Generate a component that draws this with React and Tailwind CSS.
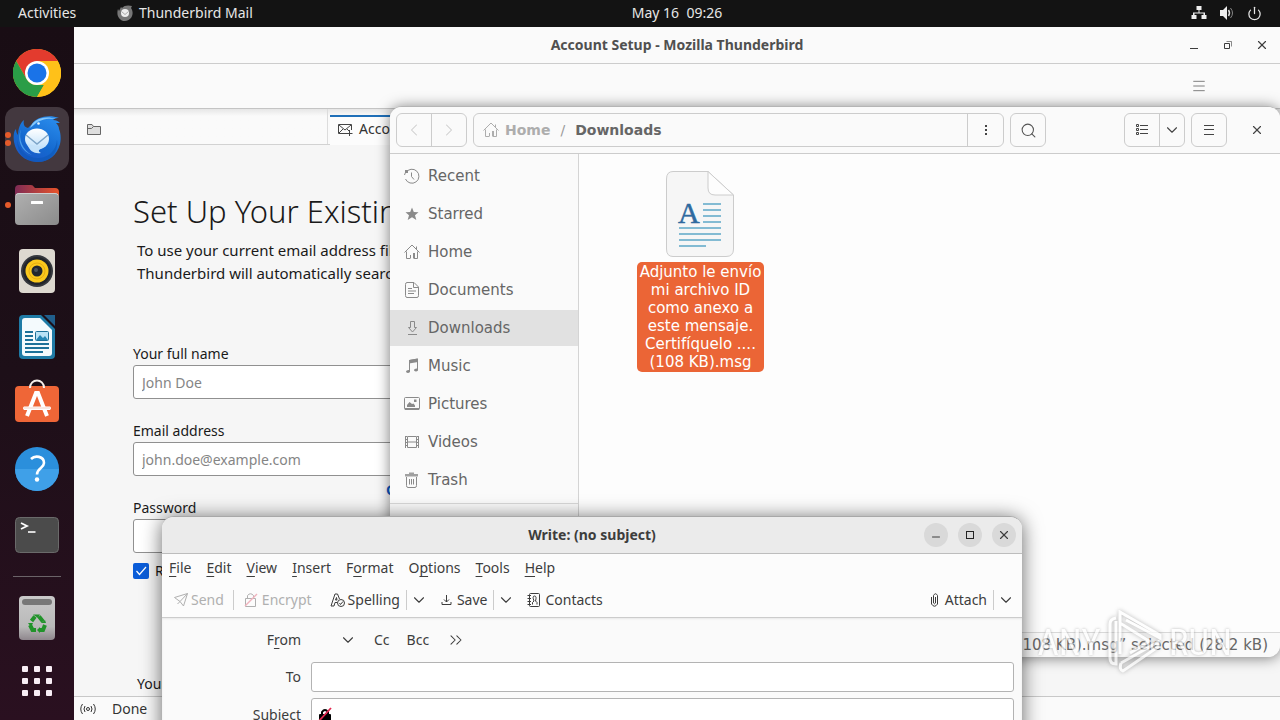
import React from "react";
import {
  ChevronDown,
  ChevronLeft,
  ChevronRight,
  ChevronsRight,
  Menu,
  Minus,
  Power,
  Search,
  X,
} from "lucide-react";

function ChromeIcon() {
  return (
    <svg width="48" height="48" viewBox="0 0 48 48">
      <circle cx="24" cy="24" r="24" fill="#ffc119" />
      <path d="M24 12 H44.8 A24 24 0 0 0 3.2 12 L13.6 30 Z" fill="#e33b2e" />
      <path d="M3.2 12 L13.6 30 A12 12 0 0 0 24 36 H31 L24 48 A24 24 0 0 1 3.2 12 Z" fill="#2a9d47" />
      <path d="M34.4 30 L24 48 A24 24 0 0 0 44.8 12 H24 Z" fill="#ffc119" />
      <circle cx="24" cy="24" r="12" fill="#fff" />
      <circle cx="24" cy="24" r="9.5" fill="#1a73e8" />
    </svg>
  );
}

function ThunderbirdIcon() {
  return (
    <svg width="48" height="48" viewBox="0 0 48 48">
      <defs>
        <linearGradient id="bird" x1="0.8" y1="0" x2="0.3" y2="1">
          <stop offset="0" stopColor="#2a8cec" />
          <stop offset="0.6" stopColor="#1469cf" />
          <stop offset="1" stopColor="#1c58c8" />
        </linearGradient>
        <linearGradient id="mail" x1="0" y1="0" x2="0" y2="1">
          <stop offset="0" stopColor="#ffffff" />
          <stop offset="1" stopColor="#bfe0fa" />
        </linearGradient>
      </defs>
      <path
        d="M19 9 C23 2 36 -1 46 3 C42 3 41 4 40 5 C43 5 45 6 47 8 L43 8 C45 10 46 12 46 14 C48 18 48 25 47 29 C44 41 34 48 23 47 C11 46 3 38 1 27 C0 20 1 16 3 14 C3 17 4 19 5 20 C5 14 7 8 11 5 C10 9 11 12 15 13 Z"
        fill="url(#bird)"
      />
      <path d="M4 25 C6 35 14 43 25 43 C35 43 43 36 44 25 C46 36 38 47 25 47 C12 47 4 38 4 25 Z" fill="#0d56b5" opacity="0.6" />
      <path d="M8 14 C5 25 10 35 19 40 C10 37 3 27 8 14 Z" fill="#55acf2" opacity="0.8" />
      <path d="M17 13 C20 4 32 0 43 4 C34 3 26 5 22 9 Z" fill="#84c7fb" />
      <ellipse cx="24" cy="24" rx="12" ry="10.5" fill="url(#mail)" />
      <path d="M13 20 L24 29 L35 20" fill="none" stroke="#7da5c8" strokeWidth="1.4" />
      <path d="M14 29 C17 37 22 39 28 38 C24 36 26 34 31 32 Z" fill="#c5e2f9" />
      <circle cx="25.500" cy="8.500" r="1.300" fill="#e5f5ff" />
    </svg>
  );
}

function FilesIcon() {
  return (
    <svg width="48" height="48" viewBox="0 0 48 48">
      <defs>
        <linearGradient id="folder" x1="0" y1="0" x2="1" y2="0">
          <stop offset="0" stopColor="#7e2b55" />
          <stop offset="1" stopColor="#e9542a" />
        </linearGradient>
        <linearGradient id="drawer" x1="0" y1="0" x2="1" y2="1">
          <stop offset="0" stopColor="#b0b0b0" />
          <stop offset="1" stopColor="#8b8b8b" />
        </linearGradient>
      </defs>
      <path d="M2 8 Q2 4 6 4 H18 Q20 4 21 6 L22 7 H42 Q46 7 46 11 V24 H2 Z" fill="url(#folder)" />
      <rect x="2" y="12" width="44" height="32" rx="4" fill="url(#drawer)" />
      <path d="M3 14 Q4 12.500 6 12.500 H42 Q44 12.500 45 14" fill="none" stroke="#d0d0d0" />
      <rect x="18" y="20" width="12" height="3" rx="0.500" fill="#fff" />
    </svg>
  );
}

function SpeakerIcon() {
  return (
    <svg width="48" height="48" viewBox="0 0 48 48">
      <rect x="6" y="2" width="36" height="44" rx="4" fill="#ddd9d0" />
      <circle cx="24" cy="24" r="16" fill="#35383d" />
      <circle cx="24" cy="24" r="14" fill="#22252a" />
      <circle cx="24" cy="24" r="11.500" fill="#fbc91c" />
      <circle cx="24" cy="24" r="8" fill="none" stroke="#e6ad12" />
      <circle cx="24" cy="24" r="5.500" fill="#22272e" />
      <circle cx="23" cy="23" r="2" fill="#4a525c" />
    </svg>
  );
}

function WriterIcon() {
  return (
    <svg width="48" height="48" viewBox="0 0 48 48">
      <path d="M10 2 H28 L42 16 V42 Q42 46 38 46 H10 Q6 46 6 42 V6 Q6 2 10 2 Z" fill="#1f7ba6" />
      <path d="M31 2 H42 V13 Z" fill="#205f8c" />
      <path d="M12 5 H27 L39 17 V40 Q39 43 36 43 H12 Q9 43 9 40 V8 Q9 5 12 5 Z" fill="#f4fafd" />
      <path d="M12 19 H20 M12 23 H20 M12 27 H20 M12 31 H36 M12 35 H36 M12 39 H30" stroke="#1d7199" strokeWidth="1.800" />
      <rect x="22.500" y="18.500" width="13" height="9" rx="1" fill="#b9e2f6" stroke="#1d7199" />
      <path d="M23 27 L27 22 L30 25 L32 23 L35 27 Z" fill="#2686b4" />
    </svg>
  );
}

function SoftwareIcon() {
  return (
    <svg width="48" height="48" viewBox="0 0 48 48">
      <rect x="2" y="7" width="44" height="36" rx="4" fill="#ef6637" />
      <path d="M17 9 C17 -1 31 -1 31 9" fill="none" stroke="#f6eee9" strokeWidth="2" />
      <path d="M14 37 L23 14 H25 L34 37" fill="none" stroke="#fff" strokeWidth="4" />
      <path d="M11 27.500 H37 Q39 29 37 31 H11 Q9 29 11 27.500 Z" fill="#fff" />
      <path d="M11 29 H37" stroke="#e8b7a4" strokeWidth="0.600" />
    </svg>
  );
}

function HelpIcon() {
  return (
    <svg width="48" height="48" viewBox="0 0 48 48">
      <circle cx="24" cy="24" r="22" fill="#2b8fdc" />
      <path d="M2 24 A22 22 0 0 0 46 24 Z" fill="#3fa0e8" />
      <path d="M18 14 C22 10 31 11 31 18 C31 23 24 23 24 29.500" fill="none" stroke="#fff" strokeWidth="2.600" />
      <circle cx="24" cy="34.500" r="2.200" fill="#fff" />
    </svg>
  );
}

function TerminalIcon() {
  return (
    <svg width="48" height="48" viewBox="0 0 48 48">
      <rect x="2.500" y="6.500" width="43" height="35" rx="4" fill="#4b4b4b" stroke="#6a6a6a" />
      <path d="M8 12 L14 15 L8 18" fill="none" stroke="#fff" strokeWidth="1.800" />
      <path d="M15 21 H22.500" stroke="#fff" strokeWidth="1.600" />
    </svg>
  );
}

function TrashBinIcon() {
  return (
    <svg width="48" height="48" viewBox="0 0 48 48">
      <defs>
        <linearGradient id="bin" x1="0" y1="0" x2="0" y2="1">
          <stop offset="0" stopColor="#c9c9c9" />
          <stop offset="0.700" stopColor="#b9b9b9" />
          <stop offset="1" stopColor="#8f878d" />
        </linearGradient>
      </defs>
      <rect x="6" y="2" width="36" height="44" rx="4" fill="url(#bin)" />
      <rect x="9" y="5" width="30" height="6" rx="3" fill="#777" />
      <g fill="none" stroke="#21932a" strokeWidth="4">
        <path d="M18.500 27 L22 22.500 M26 22.500 L30 27.500" />
        <path d="M17 31 L19.500 36 H23 M27 36 H30 L32 31" />
      </g>
      <path d="M20 20.500 H27 L25 24 Z M32 26 L28 29 H33 Z M27 33 V39 L24 36 Z M15 29 H20 L18 33 Z" fill="#21932a" />
    </svg>
  );
}

function GridIcon() {
  return (
    <svg width="48" height="48" viewBox="0 0 48 48" fill="#f8eef5">
      {[9, 21, 33].map((y) =>
        [9, 21, 33].map((x) => <rect key={`${x}-${y}`} x={x} y={y} width="6" height="6" rx="1" />)
      )}
    </svg>
  );
}

function HomeIcon() {
  return (
    <svg width="16" height="16" viewBox="0 0 16 16" fill="none" stroke="currentColor">
      <path d="M0.500 8.500 L8 1 L15.500 8.500 M12.500 5 V2.500 M2.500 7.500 V14.500 H6 M13.500 7.500 V14.500 H10" />
      <rect x="9" y="9" width="2" height="5.500" fill="currentColor" stroke="none" />
      <path d="M6.500 14.500 V11" />
    </svg>
  );
}

const places = [
  {
    name: "Recent",
    icon: (
      <>
        <path d="M2 4.500 A7 7 0 1 1 1.500 11 M0.500 7 L2 3" />
        <path d="M7.500 4.500 V8.500 L10 11.500" />
        <rect x="1" y="2" width="3" height="3" fill="currentColor" stroke="none" />
      </>
    ),
  },
  {
    name: "Starred",
    icon: (
      <path
        d="M8 1.500 L9.800 6 L14.500 6.200 L11 9.200 L12.300 14 L8 11.300 L3.700 14 L5 9.200 L1.500 6.200 L6.200 6 Z"
        fill="currentColor"
        stroke="none"
      />
    ),
  },
  { name: "Home" },
  {
    name: "Documents",
    icon: (
      <>
        <path d="M1.500 2.500 Q1.500 0.500 3 0.500 H10 L14.500 5 V13.500 Q14.500 15.500 13 15.500 H3 Q1.500 15.500 1.500 13.500 Z" />
        <path d="M9.500 1 V5.500 H14 M4 6.500 H8 M4 9 H12 M4 11.500 H10" />
      </>
    ),
  },
  {
    name: "Downloads",
    active: true,
    icon: <path d="M6.500 1.500 H10.500 V7.500 H12.500 L8.500 12 L4.500 7.500 H6.500 Z M4 14.500 H13" />,
  },
  {
    name: "Music",
    icon: (
      <>
        <path d="M5.500 13 V2.500 L13.500 1 V11.500" />
        <path d="M5 2 L14 0.500 V4 L5 5.500 Z M2 14 Q2 11.500 6 12 V14 Q4 16 2 14 Z M10 12.500 Q10 10 14 10.500 V12.500 Q12 14.500 10 12.500 Z" fill="currentColor" stroke="none" />
      </>
    ),
  },
  {
    name: "Pictures",
    icon: (
      <>
        <rect x="0.500" y="1.500" width="15" height="12" rx="1" />
        <path d="M3 11 V9 L5.500 6 L8 8 L9.500 7.500 L11 9.500 V11 Z M10 3.500 H12.500 V6 H10 Z M1 12 H15 V14 H1 Z" fill="currentColor" stroke="none" />
      </>
    ),
  },
  {
    name: "Videos",
    icon: (
      <>
        <path d="M3.500 2.500 H12.500 V13.500 H3.500 Z M3.500 8 H12.500 M1.500 2 V14 M14.500 2 V14" />
        <path d="M2.500 2 V14 M13.500 2 V14" strokeDasharray="1 2" />
      </>
    ),
  },
  {
    name: "Trash",
    icon: (
      <>
        <path d="M2.500 5 V13.500 Q2.500 15.500 4 15.500 H11 Q12.500 15.500 12.500 13.500 V5 M5.500 7 V12.500 M7.500 7 V12.500 M9.500 7 V12.500" />
        <path d="M1 2 H5 V0.500 H10 V2 H14 V4.500 H1 Z" fill="currentColor" stroke="none" opacity="0.800" />
      </>
    ),
  },
];

const dockItems = [
  { name: "Chrome", Icon: ChromeIcon, dots: 0 },
  { name: "Thunderbird", Icon: ThunderbirdIcon, dots: 2, active: true },
  { name: "Files", Icon: FilesIcon, dots: 1 },
  { name: "Rhythmbox", Icon: SpeakerIcon, dots: 0 },
  { name: "Writer", Icon: WriterIcon, dots: 0 },
  { name: "Software", Icon: SoftwareIcon, dots: 0 },
  { name: "Help", Icon: HelpIcon, dots: 0 },
  { name: "Terminal", Icon: TerminalIcon, dots: 0 },
];

function TopBar() {
  return (
    <header className="grid h-[27px] shrink-0 grid-cols-[1fr_auto_1fr] items-center bg-[#131313] pb-px pl-[92px] pr-[18px] text-[14px] leading-5 text-[#e6e6e6]">
      <div className="-ml-[74px] flex items-center">
        <button className="w-[99px] text-left">Activities</button>
        <button className="flex items-center gap-1.5">
          <svg width="16" height="16" viewBox="0 0 16 16">
            <path d="M5 3 C7 0 12 0 15 1 L14 3 C18 9 14 16 8 16 C2 16 -1 10 1 4 L2 6 L4 2 Z" fill="#777" />
            <circle cx="8" cy="8" r="4" fill="#eee" />
            <path d="M4.500 6.500 L8 9.500 L11.500 6.500" stroke="#aaa" fill="none" />
          </svg>
          Thunderbird Mail
        </button>
      </div>
      <button className="whitespace-pre">May 16  09:26</button>
      <div className="flex items-center justify-end gap-3">
        <svg width="16" height="16" viewBox="0 0 16 16" fill="#eee">
          <path d="M5.500 1 H10.500 V5 H8.500 V7.500 H14 V10 H15.500 V14 H10.500 V10 H12.500 V8.500 H3.500 V10 H5.500 V14 H0.500 V10 H2 V7.500 H7.500 V5 H5.500 Z" />
        </svg>
        <svg width="16" height="16" viewBox="0 0 16 16" fill="none" stroke="#888">
          <path d="M1 5 H4 L8 1 V15 L4 11 H1 Z" fill="#eee" stroke="none" />
          <path d="M9.500 5 Q11.500 8 9.500 11" stroke="#ddd" strokeWidth="1.500" />
          <path d="M11.500 3 Q15.500 8 11.500 13" />
        </svg>
        <Power size={15} strokeWidth={2} />
      </div>
    </header>
  );
}

function Dock() {
  return (
    <nav className="flex w-[74px] shrink-0 flex-col items-center gap-0.5 bg-gradient-to-b from-[#190d14] via-[#1d0f18] to-[#2a1020] pt-3.5">
      {dockItems.map(({ name, Icon, dots, active }) => (
        <button
          key={name}
          aria-label={name}
          className={
            active
              ? "relative flex h-16 w-16 shrink-0 items-center justify-center rounded-xl bg-[#43383f]"
              : "relative flex h-16 w-16 shrink-0 items-center justify-center rounded-xl"
          }
        >
          <Icon />
          {dots > 0 && (
            <span className="absolute inset-y-0 left-0 flex flex-col justify-center gap-0.5">
              {Array.from({ length: dots }, (_, i) => (
                <span key={i} className="h-1.5 w-1.5 rounded-full bg-[#e65a2a]" />
              ))}
            </span>
          )}
        </button>
      ))}
      <hr className="my-[7px] w-12 border-[#6b6368]" />
      <button aria-label="Trash" className="flex h-16 w-16 shrink-0 items-center justify-center">
        <TrashBinIcon />
      </button>
      <button aria-label="Show Applications" className="flex h-[58px] w-16 shrink-0 items-center justify-center">
        <GridIcon />
      </button>
    </nav>
  );
}

function Field({ id, label, type = "text", placeholder, children }) {
  return (
    <div>
      <label htmlFor={id} className="block h-[22px] leading-[22px]">
        {label}
      </label>
      <input
        id={id}
        type={type}
        placeholder={placeholder}
        className="block h-[34px] w-full rounded-[3px] border border-[#909090] bg-white px-2 placeholder:text-[#858585]"
      />
      <div className="h-[21px] pl-[253px]">{children}</div>
    </div>
  );
}

function MailWindow() {
  return (
    <section className="flex h-full flex-col bg-[#fafafa] text-[14px] leading-5 text-[#1a1a1a]">
      <div className="grid h-[37px] shrink-0 grid-cols-[1fr_auto_1fr] items-center border-b border-[#cccccc] px-2.5 text-[#3d3d3d]">
        <span />
        <h1 className="font-bold text-[#505050]">Account Setup - Mozilla Thunderbird</h1>
        <div className="flex items-center justify-end gap-[18px]">
          <button aria-label="Minimize" className="flex h-4 w-4 items-end justify-center pb-1">
            <span className="h-px w-2 bg-[#3d3d3d]" />
          </button>
          <button aria-label="Restore">
            <svg width="16" height="16" viewBox="0 0 16 16" fill="none" stroke="currentColor">
              <path d="M4.500 6.500 H9.500 V11.500 H4.500 Z" />
              <path d="M6.500 4.500 H11.500 V9.500" opacity="0.600" />
            </svg>
          </button>
          <button aria-label="Close">
            <X size={16} strokeWidth={2} className="p-px" />
          </button>
        </div>
      </div>
      <div className="flex h-[45px] shrink-0 items-center justify-end border-b border-[#c4c4c4] pr-[73px] text-[#444444]">
        <button aria-label="Application menu">
          <Menu size={16} strokeWidth={1} />
        </button>
      </div>
      <div className="flex h-9 shrink-0 border-b border-[#d2d2d2] bg-gradient-to-b from-[#e6e6e6] via-[#fafafa] via-20% to-[#fafafa]">
        <button aria-label="Mail folders" className="flex w-[254px] items-center border-r border-[#dcdcdc] pl-3 pt-1.5">
          <svg width="16" height="16" viewBox="0 0 16 16" fill="#dedede" stroke="#666">
            <path d="M1.500 12.500 V2.500 H6 L7.500 4.500 H14.500 V12.500 Z" />
            <path d="M2 6.500 H5.500 L7.500 4.500" fill="none" />
          </svg>
        </button>
        <button className="-mb-px ml-0.5 mt-1.5 flex w-56 items-center gap-1.5 border-t-2 border-[#1f6fb8] bg-[#fcfcfc] pb-1 pl-[7px] text-[#333333]">
          <svg width="16" height="16" viewBox="0 0 16 16" fill="none" stroke="#444">
            <path d="M10 12.500 H1.500 V3.500 H14.500 V9 M2 4 L8 9 L14 4 M2 12 L6 8 M10 8 L12 10 M12.500 9 V15 M9.500 12.500 H15.500" />
          </svg>
          Account Setup
        </button>
      </div>
      <main className="flex-1 overflow-hidden bg-[#f6f6f6] pl-[59px] pt-[46px]">
        <h2 className="whitespace-nowrap text-[31px] font-light leading-10">Set Up Your Existing Email</h2>
        <p className="mt-2 whitespace-nowrap pl-1 text-[15px] leading-[23px]">
          To use your current email address fill in
          <br />
          Thunderbird will automatically search for
        </p>
        <form className="mt-[58px] w-[440px]">
          <Field id="name" label="Your full name" placeholder="John Doe" />
          <Field id="email" label="Email address" placeholder="john.doe@example.com">
            <a href="#new" className="whitespace-nowrap font-bold leading-7 text-[#0b57c0]">
              Get a new email address
            </a>
          </Field>
          <Field id="password" label="Password" type="password" />
          <label className="-mt-[13px] flex h-5 items-center gap-1.5">
            <span className="relative h-4 w-4">
              <input
                type="checkbox"
                defaultChecked
                className="block h-4 w-4 appearance-none rounded-[2px] bg-[#0a5cd8]"
              />
              <svg className="pointer-events-none absolute inset-0" width="16" height="16" viewBox="0 0 16 16">
                <path d="M3.500 8 L6.500 11.500 L13 4" fill="none" stroke="#fff" strokeWidth="1.200" />
              </svg>
            </span>
            Remember password
          </label>
        </form>
        <p className="mt-[93px] pl-1">Your credentials</p>
      </main>
      <footer className="flex h-6 shrink-0 items-center gap-4 border-t border-[#c8c8c8] pl-1.5 text-[#333333]">
        <svg width="16" height="16" viewBox="0 0 16 16" fill="none" stroke="#333">
          <circle cx="8" cy="8" r="1.500" />
          <path d="M5 5 Q3 8 5 11 M11 5 Q13 8 11 11 M2.500 3 Q-1 8 2.500 13 M13.500 3 Q17 8 13.500 13" />
        </svg>
        Done
      </footer>
    </section>
  );
}

function FilesWindow() {
  return (
    <section className="absolute bottom-[63px] left-[316px] right-0 top-[79px] flex flex-col overflow-hidden rounded-xl border-t border-[#b5b5b5] bg-[#fdfdfd] font-['DejaVu_Sans',sans-serif] text-[15px] text-[#666666] shadow-[0_1px_14px_rgba(0,0,0,0.5)]">
      <header className="flex h-[47px] shrink-0 items-center gap-1.5 border-b border-[#cccccc] bg-[#fafafa] pl-1.5 pr-[5px]">
        <div className="flex h-[34px] divide-x divide-[#cccccc] rounded-md border border-[#cccccc] text-[#cccccc]">
          <button aria-label="Back" className="flex w-[35px] items-center justify-center">
            <ChevronLeft size={20} strokeWidth={1.25} />
          </button>
          <button aria-label="Forward" className="flex w-[34px] items-center justify-center">
            <ChevronRight size={20} strokeWidth={1.25} />
          </button>
        </div>
        <div className="flex h-[34px] flex-1 items-center rounded-md border border-[#cccccc] text-[14px] font-bold">
          <a href="#home" className="flex items-center gap-1.5 pl-[9px] text-[#adadad]">
            <HomeIcon />
            Home
          </a>
          <span className="px-2.5 font-normal text-[#999999]">/</span>
          <span>Downloads</span>
          <button aria-label="Folder options" className="ml-auto flex h-full w-9 items-center justify-center border-l border-[#cccccc]">
            <svg width="16" height="16" viewBox="0 0 16 16" fill="#444">
              <path d="M7 3 H9 V5 H7 Z M7 7 H9 V9 H7 Z M7 11 H9 V13 H7 Z" />
            </svg>
          </button>
        </div>
        <button aria-label="Search" className="flex h-[34px] w-9 items-center justify-center rounded-md border border-[#cccccc] text-[#555555]">
          <Search size={17} strokeWidth={1.5} />
        </button>
        <div className="ml-[72px] flex h-[34px] divide-x divide-[#cccccc] rounded-md border border-[#cccccc] text-[#444444]">
          <button aria-label="List view" className="flex w-[35px] items-center justify-center">
            <svg width="16" height="16" viewBox="0 0 16 16" fill="none" stroke="currentColor">
              <path d="M2.500 2.500 H4.500 V4.500 H2.500 Z M2.500 6.500 H4.500 V8.500 H2.500 Z M2.500 10.500 H4.500 V12.500 H2.500 Z M6 3.500 H14 M6 7.500 H14 M6 11.500 H14" />
            </svg>
          </button>
          <button aria-label="View options" className="flex w-6 items-center justify-center">
            <ChevronDown size={18} strokeWidth={1.5} />
          </button>
        </div>
        <button aria-label="Menu" className="flex h-[34px] w-9 items-center justify-center rounded-md border border-[#cccccc] text-[#444444]">
          <svg width="16" height="16" viewBox="0 0 16 16" stroke="currentColor">
            <path d="M3 3.500 H13 M3 7.500 H13 M3 12.500 H13" />
          </svg>
        </button>
        <button aria-label="Close" className="ml-1.5 flex h-[34px] w-9 items-center justify-center text-[#444444]">
          <X size={14} strokeWidth={2} />
        </button>
      </header>
      <div className="flex flex-1">
        <aside className="w-[189px] shrink-0 border-r border-[#d4d4d4] bg-[#fafafa] pt-1">
          <ul className="flex flex-col gap-0.5 border-b border-[#d8d8d8] pb-[5px]">
            {places.map((place) => (
              <li key={place.name}>
                <a
                  href={`#${place.name}`}
                  className={
                    place.active
                      ? "flex h-9 items-center gap-2 bg-[#e1e1e1] pl-3.5"
                      : "flex h-9 items-center gap-2 pl-3.5"
                  }
                >
                  <span className="text-[#8a8a8a]">
                    {place.icon ? (
                      <svg width="16" height="16" viewBox="0 0 16 16" fill="none" stroke="currentColor">
                        {place.icon}
                      </svg>
                    ) : (
                      <HomeIcon />
                    )}
                  </span>
                  {place.name}
                </a>
              </li>
            ))}
          </ul>
        </aside>
        <div className="flex flex-1 flex-col justify-between">
          <figure className="ml-[58px] mt-4 flex w-[127px] flex-col items-center gap-1">
            <svg width="72" height="88" viewBox="0 0 72 88">
              <path d="M8 1.500 H43 L68.500 25 V79 Q68.500 86.500 61 86.500 H8 Q1.500 86.500 1.500 79 V9 Q1.500 1.500 8 1.500 Z" fill="#f6f6f6" stroke="#cccccc" />
              <path d="M43 1.500 V18 Q43 25 50 25 H68.500 Z" fill="#fdfdfd" stroke="#cccccc" />
              <text x="13" y="53" fontFamily="Liberation Serif, serif" fontSize="30" fill="#2f6a9f" stroke="#2f6a9f" strokeWidth="0.5">
                A
              </text>
              <path d="M38 34 H56 M38 40 H56 M38 46 H56 M38 52 H56 M14 58 H56 M14 64 H56 M14 70 H56 M14 76 H41" stroke="#5da8c8" strokeWidth="1.600" />
            </svg>
            <figcaption className="w-full whitespace-nowrap rounded-[5px] bg-[#eb6536] py-px text-center leading-[18px] text-white">
              Adjunto le envío
              <br />
              mi archivo ID
              <br />
              como anexo a
              <br />
              este mensaje.
              <br />
              Certifíquelo ....
              <br />
              (108 KB).msg
            </figcaption>
          </figure>
          <p className="flex h-[25px] items-center justify-end overflow-hidden whitespace-nowrap border-t border-[#d8d8d8] bg-[#fafafa] pr-3">
            “Adjunto le envío mi archivo ID como anexo (108 KB).msg” selected (28.2 kB)
          </p>
        </div>
      </div>
    </section>
  );
}

const menus = [
  ["", "F", "ile"],
  ["", "E", "dit"],
  ["", "V", "iew"],
  ["", "I", "nsert"],
  ["F", "o", "rmat"],
  ["O", "p", "tions"],
  ["", "T", "ools"],
  ["", "H", "elp"],
];

function MoreButton({ label }) {
  return (
    <button aria-label={label} className="flex h-5 items-center border-l border-[#cccccc] pl-[3px]">
      <ChevronDown size={18} strokeWidth={1.5} />
    </button>
  );
}

function ComposeWindow() {
  return (
    <section className="absolute left-[88px] top-[489px] flex h-[400px] w-[860px] flex-col overflow-hidden rounded-t-xl border-t border-[#a8a8a8] bg-[#fafafa] text-[14px] leading-5 text-[#3d3d3d] shadow-[0_2px_20px_rgba(0,0,0,0.6)]">
      <div className="grid h-[37px] shrink-0 grid-cols-[1fr_auto_1fr] items-center border-b border-[#bdbdbd] bg-[#ebebeb] px-1.5">
        <span />
        <h2 className="font-bold">Write: (no subject)</h2>
        <div className="flex justify-end gap-2.5">
          <button aria-label="Minimize" className="flex h-6 w-6 items-center justify-center rounded-full bg-[#d9d9d9] pt-1">
            <Minus size={12} strokeWidth={2} />
          </button>
          <button aria-label="Maximize" className="flex h-6 w-6 items-center justify-center rounded-full bg-[#d9d9d9]">
            <span className="h-2 w-2 border border-[#222222]" />
          </button>
          <button aria-label="Close" className="flex h-6 w-6 items-center justify-center rounded-full bg-[#d9d9d9]">
            <X size={14} strokeWidth={2} />
          </button>
        </div>
      </div>
      <div className="flex h-7 shrink-0 items-center gap-[15px] bg-[#fcfcfc] px-[7px]">
        {menus.map(([before, key, after]) => (
          <button key={before + key + after}>
            {before}
            <span className="underline underline-offset-3">{key}</span>
            {after}
          </button>
        ))}
      </div>
      <div className="flex h-9 shrink-0 items-center border-b border-[#cccccc] bg-[#fcfcfc] pl-[11px] pr-[7px]">
        <button disabled className="flex items-center gap-0.5 border-r border-[#cccccc] pr-[9px] text-[#b0b0b0]">
          <svg width="16" height="16" viewBox="0 0 16 16" fill="none" stroke="currentColor">
            <path d="M1.500 5.500 L14.500 1.500 L10.500 14 L7 9.500 Z M7 9.500 L14.500 1.500 M7 9.500 L4.500 12" />
          </svg>
          Send
        </button>
        <button disabled className="ml-[9px] flex items-center gap-[3px] text-[#b0b0b0]">
          <svg width="16" height="16" viewBox="0 0 16 16" fill="none" stroke="currentColor">
            <path d="M2.500 6.500 H12.500 V14.500 H2.500 Z M4.500 6 V3.500 Q7.500 0 10.500 3.500 V6" />
            <path d="M2 14 L14 2" stroke="#efb3bd" strokeWidth="1.500" />
          </svg>
          Encrypt
        </button>
        <button className="ml-[18px] mr-1.5 flex items-center gap-0.5">
          <svg width="16" height="16" viewBox="0 0 16 16" fill="none" stroke="currentColor">
            <path d="M1 14 L5 2 H7.500 L9.500 7 M4 14 L5 10.500 H7 M5.500 8 L6.500 5.500 L7 8 Z M1 14 H4" />
            <circle cx="11" cy="11" r="3.500" />
            <path d="M9.500 11 L10.500 12.500 L13 9.500" />
          </svg>
          Spelling
        </button>
        <MoreButton label="Spelling options" />
        <button className="ml-[11px] mr-1.5 flex items-center gap-0.5">
          <svg width="16" height="16" viewBox="0 0 16 16" fill="none" stroke="currentColor">
            <path d="M7.500 3 V10 M5 7.500 L7.500 10 L10 7.500 M3 10 V12.500 H12 V10" />
          </svg>
          Save
        </button>
        <MoreButton label="Save options" />
        <button className="ml-[11px] flex items-center gap-[3px]">
          <svg width="16" height="16" viewBox="0 0 16 16" fill="none" stroke="currentColor">
            <rect x="3.500" y="1.500" width="10" height="13" rx="1" />
            <path d="M1.500 3.500 H5 M1.500 6.500 H5 M1.500 9.500 H5 M1.500 12.500 H5 M6.500 12.500 V10.500 L8 9 Q6 4 8.500 4 Q11 4 9.500 9 L11 10.500 V12.500" />
          </svg>
          Contacts
        </button>
        <button className="ml-auto mr-1.5 flex items-center gap-0.5">
          <svg width="16" height="16" viewBox="0 0 16 16" fill="none" stroke="currentColor">
            <path d="M8.500 5 V11 Q7.500 12.500 6.500 11 V3.500 Q8.500 0 10.500 3.500 V12 Q7.500 16.500 4.500 12 V5" />
          </svg>
          Attach
        </button>
        <MoreButton label="Attach options" />
      </div>
      <form className="grid grid-cols-[139px_1fr] items-center gap-x-2.5 pr-2 shadow-[inset_0_1px_2px_#e8e8e8]">
        <label htmlFor="from" className="text-right">
          F<span className="underline underline-offset-3">r</span>om
        </label>
        <div className="flex h-11 items-center gap-[17px]">
          <span className="flex items-center">
            <select id="from" className="w-7 appearance-none bg-transparent" />
            <ChevronDown size={18} strokeWidth={1.5} />
          </span>
          <button type="button">Cc</button>
          <button type="button">Bcc</button>
          <button type="button" aria-label="More recipients">
            <ChevronsRight size={20} strokeWidth={1.25} />
          </button>
        </div>
        <label htmlFor="to" className="text-right">
          To
        </label>
        <input id="to" className="h-[30px] rounded-[3px] border border-[#b3b3b3] bg-white px-2" />
        <label htmlFor="subject" className="mt-1.5 text-right">
          Subject
        </label>
        <div className="mt-1.5 flex h-[34px] items-center rounded-[3px] border border-[#b3b3b3] bg-white pl-[5px]">
          <svg width="16" height="16" viewBox="0 0 16 16">
            <path d="M5 8 V5 Q8 1 11 5 V8" fill="none" stroke="#000" strokeWidth="2" />
            <rect x="2" y="7" width="12" height="9" rx="1" />
            <path d="M1 15 L14 1" stroke="#e22850" strokeWidth="1.800" />
          </svg>
          <input id="subject" className="h-full flex-1 bg-transparent px-1" />
        </div>
      </form>
    </section>
  );
}

function Watermark() {
  return (
    <div className="pointer-events-none absolute bottom-[46px] right-12 flex items-center gap-1.5 font-['Noto_Sans_ExtraCondensed','Roboto_Condensed','Open_Sans_Condensed','Liberation_Sans_Narrow','Liberation_Sans',sans-serif] text-[37px] leading-none text-white opacity-70 [text-shadow:0_0_3px_#999]">
      <span>ANY</span>
      <svg width="56" height="64" viewBox="0 0 56 64" fill="none" stroke="#fff" strokeWidth="3" className="drop-shadow-[0_0_2px_#999]">
        <path d="M13 44 V2 L53 25 V28 L19 10 M13 13 L42 31 L38 34 L23 43 M9 8 Q3 9 3 14 V48 Q3 54 9 54 V11 M14 53 L51 32 V37 L16 61 Q12 60 14 53" />
      </svg>
      <span>RUN</span>
    </div>
  );
}

export default function App() {
  return (
    <div className="flex h-screen w-full flex-col overflow-hidden font-['Noto_Sans',sans-serif]">
      <TopBar />
      <div className="flex min-h-0 flex-1">
        <Dock />
        <div className="relative min-w-0 flex-1 overflow-hidden">
          <MailWindow />
          <FilesWindow />
          <ComposeWindow />
          <Watermark />
        </div>
      </div>
    </div>
  );
}
